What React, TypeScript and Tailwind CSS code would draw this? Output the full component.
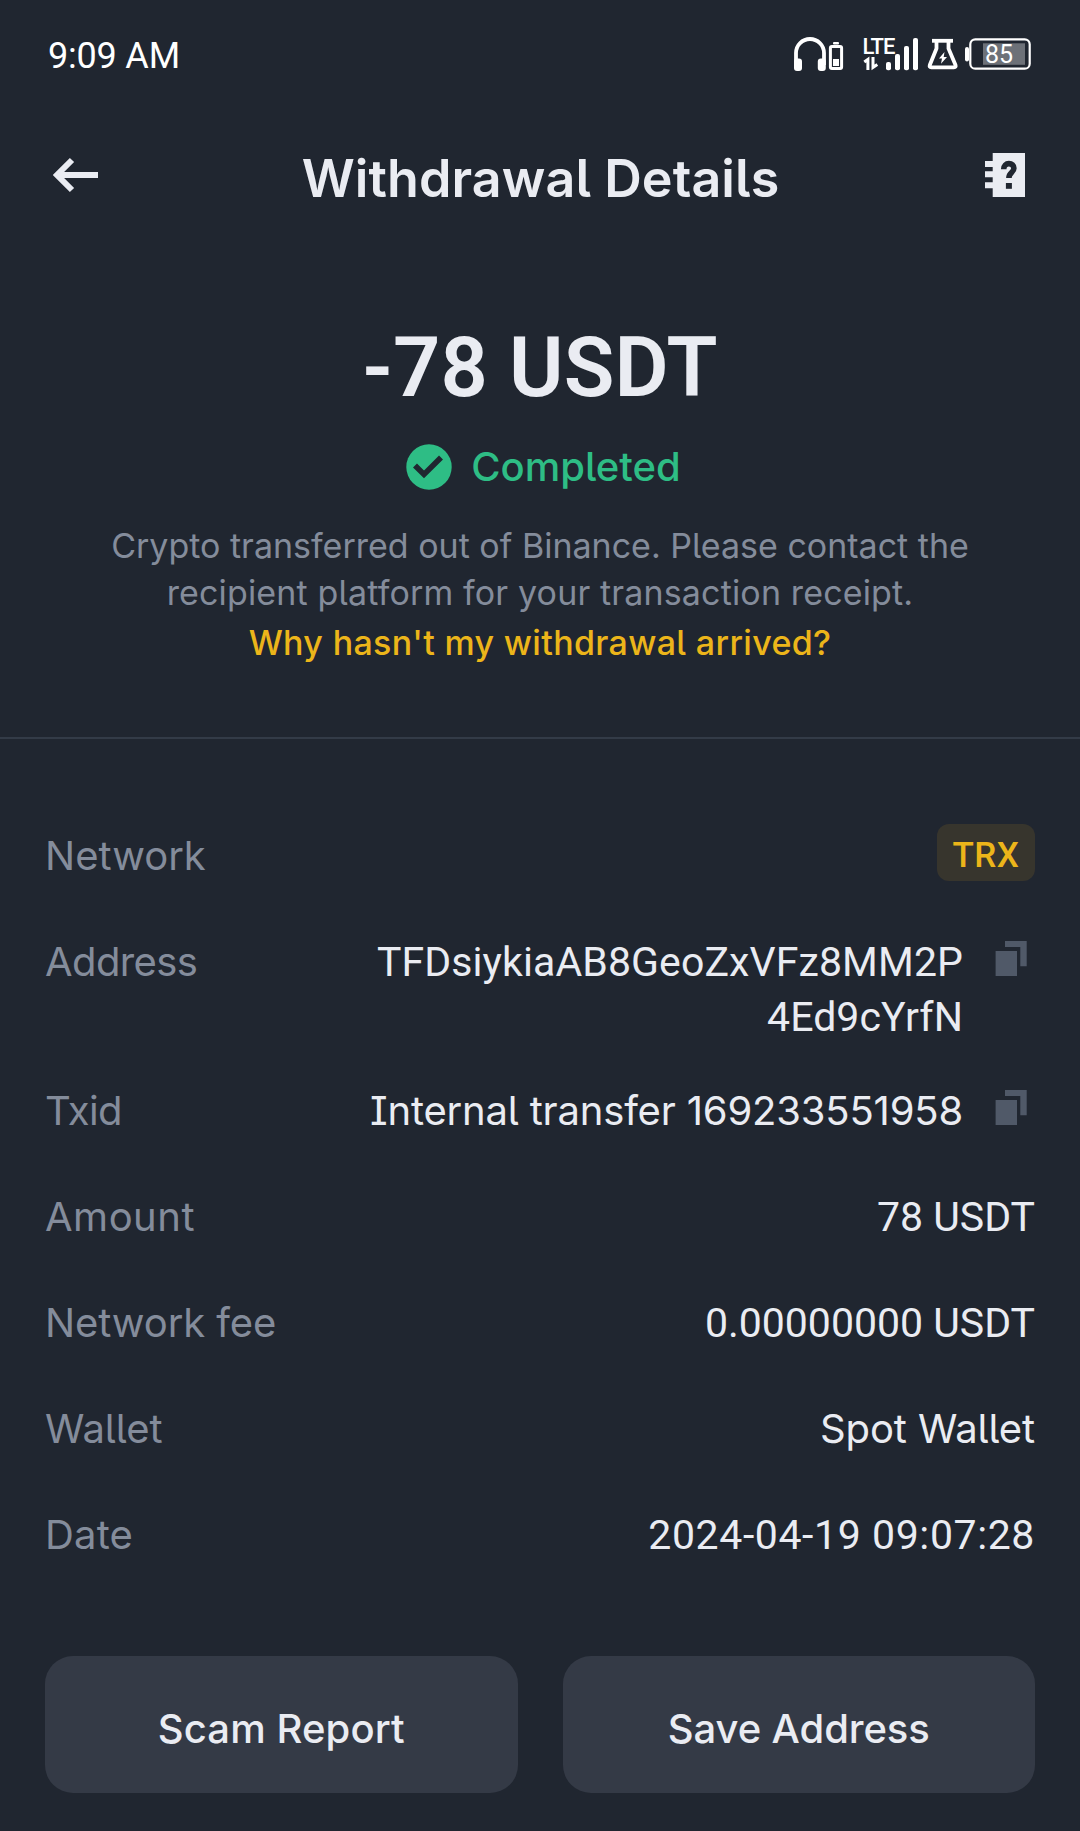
import type { ReactNode } from "react";
import { clsx } from "clsx";

type Detail = {
  label: string;
  labelClass?: string;
  value: ReactNode;
  valueClass?: string;
  copyable?: boolean;
};

const numeric = "pt-px font-['Roboto',sans-serif] text-[41px]";

const details: Detail[] = [
  {
    label: "Network",
    value: (
      <span className="-mt-1 -mb-0.5 flex h-[57px] w-[98px] items-center justify-center rounded-xl bg-[#37352d] pt-1.5 font-['Roboto',sans-serif] text-[35px] font-medium tracking-[0.5px] text-[#ecb51a]">
        TRX
      </span>
    ),
  },
  {
    label: "Address",
    labelClass: "tracking-[-0.6px]",
    value: (
      <>
        TFDsiykiaAB8GeoZxVFz8MM2P
        <br />
        4Ed9cYrfN
      </>
    ),
    valueClass: clsx(numeric, "-mb-[13px] tracking-[0.1px]"),
    copyable: true,
  },
  {
    label: "Txid",
    labelClass: "tracking-[-0.6px]",
    value: "Internal transfer 169233551958",
    valueClass: "tracking-[-0.18px]",
    copyable: true,
  },
  {
    label: "Amount",
    labelClass: "tracking-[0.5px]",
    value: "78 USDT",
    valueClass: clsx(numeric, "-mb-px"),
  },
  {
    label: "Network fee",
    labelClass: "tracking-[-0.1px]",
    value: "0.00000000 USDT",
    valueClass: clsx(numeric, "-mb-px"),
  },
  {
    label: "Wallet",
    value: "Spot Wallet",
    valueClass: "tracking-[-0.1px]",
  },
  {
    label: "Date",
    labelClass: "tracking-[0.2px]",
    value: "2024-04-19 09:07:28",
    valueClass: clsx(numeric, "-mb-px tracking-[0.6px]"),
  },
];

function StatusIcons() {
  return (
    <svg
      aria-hidden="true"
      width="270"
      height="60"
      viewBox="0 0 270 60"
      fill="none"
      className="mb-0.5 text-white"
    >
      {/* headset with its own battery level */}
      <path d="M16 40V28a14 14 0 0 1 28 0v12" stroke="currentColor" strokeWidth="3.8" />
      <rect x="14" y="33.5" width="8" height="12.5" rx="3" fill="currentColor" />
      <rect x="37.8" y="33.5" width="8" height="12.5" rx="3" fill="currentColor" />
      <rect x="50.4" y="21.4" width="11.2" height="22.2" rx="1.5" stroke="currentColor" strokeWidth="3" />
      <rect x="53" y="17" width="6" height="2.6" rx="1" fill="currentColor" />
      <rect x="53" y="34" width="6" height="7" fill="currentColor" />

      {/* mobile network */}
      <text
        x="82.5"
        y="29"
        fill="currentColor"
        className="font-['Roboto',sans-serif] text-[22px] font-medium tracking-[-1.1px]"
      >
        LTE
      </text>
      <path d="M84.3 37l3.6-2.6V45M93 32v10.4l4.3-2.9" stroke="currentColor" strokeWidth="3" />
      <rect x="106" y="37" width="5" height="8.3" rx="2" fill="currentColor" />
      <rect x="115" y="29" width="5" height="16.3" rx="2" fill="currentColor" />
      <rect x="124" y="21" width="5" height="24.3" rx="2" fill="currentColor" />
      <rect x="133" y="13" width="5" height="32.3" rx="2" fill="currentColor" />

      {/* flask */}
      <path d="M152 15.8h21" stroke="currentColor" strokeWidth="3.8" />
      <path
        d="M156.5 16V23.5L149.8 40Q149 42.3 151.3 42.3H174Q176.3 42.3 175.5 40L168.5 23.5V16"
        stroke="currentColor"
        strokeWidth="3.8"
        strokeLinejoin="round"
      />
      <path d="M164.5 27L159 33.5H162L161 38.7L167 32H163.7Z" fill="currentColor" />

      {/* phone battery */}
      <rect x="185" y="22" width="4" height="14.5" rx="2" fill="currentColor" />
      <rect x="190.3" y="14.3" width="59.4" height="29.4" rx="5" stroke="currentColor" strokeWidth="2.2" />
      <rect x="203" y="18.3" width="42" height="21.5" fill="#6d7178" />
      <text
        x="205"
        y="37.5"
        fill="currentColor"
        className="font-['Roboto',sans-serif] text-[25px]"
      >
        85
      </text>
    </svg>
  );
}

function BackIcon() {
  return (
    <svg aria-hidden="true" width="46" height="36" viewBox="0 0 46 36" fill="none">
      <path d="M20 3L5 18l15 15M5 18h41" stroke="currentColor" strokeWidth="6" />
    </svg>
  );
}

function GuideIcon() {
  return (
    <svg aria-hidden="true" width="40" height="44" viewBox="0 0 40 44" fill="none">
      <path
        d="M7.7 0H40v44H7.7v-8.7H0v-6h7.7v-5H0v-6h7.7v-4.3H0V8h7.7z"
        fill="currentColor"
      />
      <path
        d="M18.7 16.2c0-3.5 2.3-5.6 5.2-5.6s5 1.9 5 4.7c0 4.3-5 4.3-5 9.7"
        stroke="#202630"
        strokeWidth="5.6"
      />
      <path d="M20.9 30h6v5.8h-6z" fill="#202630" />
    </svg>
  );
}

function CompletedIcon() {
  return (
    <svg aria-hidden="true" width="46" height="46" viewBox="0 0 46 46" fill="none">
      <circle cx="23" cy="23" r="22.7" fill="currentColor" />
      <path d="M9 21.4l9 9 17-17" stroke="#202630" strokeWidth="5.6" />
    </svg>
  );
}

function CopyIcon() {
  return (
    <svg
      aria-hidden="true"
      width="32"
      height="35"
      viewBox="0 0 32 35"
      fill="currentColor"
      className="mt-[7px] mr-2 ml-8 shrink-0 text-[#505968]"
    >
      <path d="M10 0h21.7v25.3h-6.4V6H10z" />
      <path d="M.6 10H22v25H.6z" />
    </svg>
  );
}

function DetailRow({ label, labelClass, value, valueClass, copyable }: Detail) {
  return (
    <div className="flex items-start">
      <dt className={clsx("flex-1 text-[#848c9b]", labelClass)}>{label}</dt>
      <dd className={clsx("text-right", valueClass)}>{value}</dd>
      {copyable && <CopyIcon />}
    </div>
  );
}

export default function App() {
  return (
    <div className="min-h-[1831px] w-[1080px] bg-[#202630] font-['Inter',sans-serif] text-[#eaecf2] [font-feature-settings:'cv05','cv08']">
      <div className="flex h-28 items-center justify-between pr-[30px] pl-12 text-white">
        <span className="font-['Roboto',sans-serif] text-[36px] tracking-[-0.2px]">9:09 AM</span>
        <StatusIcons />
      </div>

      <header className="flex h-[132px] items-center justify-between pr-[55px] pl-[52px]">
        <button type="button" aria-label="Back" className="mb-1.5">
          <BackIcon />
        </button>
        <h1 className="pt-0.5 pr-0.5 text-[52px] font-semibold tracking-[0.1px]">
          Withdrawal Details
        </h1>
        <button type="button" aria-label="Help" className="mb-1.5">
          <GuideIcon />
        </button>
      </header>

      <section className="flex flex-col items-center border-b-2 border-[#333b47] pt-[74px] pb-[69px] text-center">
        <p className="font-['Roboto',sans-serif] text-[83px]/[100px] font-semibold tracking-[0.2px]">
          -78 USDT
        </p>
        <div className="mt-[21px] flex h-14 items-center gap-[19px] pl-[7px] text-[#2ebd85]">
          <CompletedIcon />
          <span className="text-[40px] font-medium">Completed</span>
        </div>
        <p className="mt-[27px] text-[34px]/[47px] text-[#848c9b]">
          Crypto transferred out of Binance. Please contact the
          <br />
          <span className="tracking-[0.15px]">
            recipient platform for your transaction receipt.
          </span>
        </p>
        <a
          href="#"
          className="mt-0.5 text-[34px]/[50px] font-medium tracking-[0.33px] text-[#ecb51a]"
        >
          Why hasn't my withdrawal arrived?
        </a>
      </section>

      <dl className="flex flex-col gap-[51px] px-[45px] pt-[89px] text-[40px]/[55px]">
        {details.map((detail) => (
          <DetailRow key={detail.label} {...detail} />
        ))}
      </dl>

      <div className="mt-[94px] grid grid-cols-2 gap-[45px] px-[45px] text-[40px] font-medium">
        <button type="button" className="h-[137px] rounded-[28px] bg-[#343a46] pt-2 tracking-[0.1px]">
          Scam Report
        </button>
        <button type="button" className="h-[137px] rounded-[28px] bg-[#343a46] pt-2 tracking-[-0.1px]">
          Save Address
        </button>
      </div>
    </div>
  );
}
